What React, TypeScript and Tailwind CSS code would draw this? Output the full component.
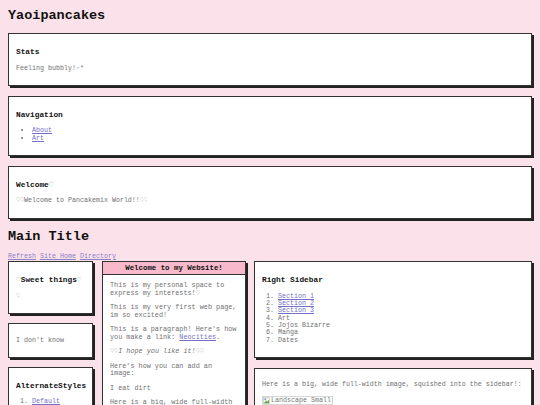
import React from 'react';

const Heart: React.FC<{ children?: React.ReactNode }> = ({ children }) => (
    <span className="text-[#8f8f8f] font-normal">{children ?? '♡'}</span>
);

const Box: React.FC<{ children: React.ReactNode; className?: string }> = ({ children, className = '' }) => (
    <div className={`border border-[#333] bg-white shadow-[2px_2px_0_#222] px-[7px] py-[6px] ${className}`}>
        {children}
    </div>
);

const H3: React.FC<{ children: React.ReactNode }> = ({ children }) => (
    <h3 className="my-[7.8px] text-[7.8px] font-bold text-[#111]">{children}</h3>
);

const P: React.FC<{ children: React.ReactNode; className?: string }> = ({ children, className = '' }) => (
    <p className={`my-[6.7px] ${className}`}>{children}</p>
);

const A: React.FC<{ children: React.ReactNode }> = ({ children }) => (
    <a href="#" className="text-[#7470c4] underline">{children}</a>
);

const App: React.FC = () => {
    const sidebar = [
        { label: 'Section 1', link: true },
        { label: 'Section 2', link: true },
        { label: 'Section 3', link: true },
        { label: 'Art', link: false },
        { label: 'Jojos Bizarre', link: false },
        { label: 'Manga', link: false },
        { label: 'Dates', link: false },
    ];

    return (
        <div className="h-[405px] overflow-hidden bg-[#fbe2ea] p-2 font-['Liberation_Mono','Courier_New',monospace] text-[6.67px] leading-[1.13] text-[#717171]">
            <h1 className="mb-[10px] text-[13.5px] font-bold text-[#111]">Yaoipancakes</h1>

            {/* Top boxes */}
            <div className="flex flex-col gap-[10px]">
                <Box>
                    <H3>Stats</H3>
                    <P>Feeling bubbly!◦*</P>
                </Box>
                <Box>
                    <H3>Navigation</H3>
                    <ul className="my-[6.7px] list-disc pl-[16px]">
                        <li><A>About</A></li>
                        <li><A>Art</A></li>
                    </ul>
                </Box>
                <Box>
                    <H3>Welcome<Heart /></H3>
                    <P><Heart>♡♡</Heart>Welcome to Pancakemix World!!<Heart>♡♡</Heart></P>
                </Box>
            </div>

            <h1 className="mt-[10px] mb-[9px] text-[13.5px] font-bold text-[#111]">Main Title</h1>
            <div className="mb-[1px] flex gap-[4px]">
                <a href="#" className="text-[#8a80c8] underline">Refresh</a>
                <a href="#" className="text-[#8a80c8] underline">Site Home</a>
                <a href="#" className="text-[#8a80c8] underline">Directory</a>
            </div>

            <div className="flex items-start">
                {/* Left column */}
                <div className="mr-[9px] flex w-[85px] shrink-0 flex-col gap-[9px]">
                    <Box>
                        <H3><Heart />Sweet things<Heart /></H3>
                        <P><Heart /></P>
                    </Box>
                    <Box>
                        <P>I don't know</P>
                    </Box>
                    <Box>
                        <H3>AlternateStyles</H3>
                        <ol className="my-[6.7px] list-decimal pl-[16px]">
                            <li><A>Default</A></li>
                            <li><A>Dark</A></li>
                            <li><A>Pastel</A></li>
                        </ol>
                    </Box>
                </div>

                {/* Main column */}
                <div className="mr-[8px] w-[144px] shrink-0 border border-[#333] bg-white shadow-[2px_2px_0_#222]">
                    <div className="flex h-[12.5px] items-center justify-center border-b border-[#333] bg-[#f7b9cb] text-[7.4px] font-bold text-[#111]">
                        Welcome to my Website!
                    </div>
                    <div className="px-[7px] pt-[0.5px] pb-[6px] text-[6.8px]">
                        <P>This is my personal space to express my interests!<Heart /></P>
                        <P>This is my very first web page, im so excited!</P>
                        <P>This is a paragraph! Here's how you make a link: <A>Neocities</A>.</P>
                        <P className="italic"><Heart>♡♡</Heart>I hope you like it!<Heart>♡♡</Heart></P>
                        <P>Here's how you can add an image:</P>
                        <P>I eat dirt</P>
                        <P>Here is a big, wide full-width image, squished into the main column!</P>
                    </div>
                </div>

                {/* Right column */}
                <div className="flex min-w-0 flex-1 flex-col gap-[10px]">
                    <Box>
                        <H3>Right Sidebar</H3>
                        <ol className="my-[6.7px] list-decimal pl-[16px] leading-[1.1]">
                            {sidebar.map(item => (
                                <li key={item.label}>{item.link ? <A>{item.label}</A> : item.label}</li>
                            ))}
                        </ol>
                    </Box>
                    <Box>
                        <P className="whitespace-nowrap">Here is a big, wide full-width image, squished into the sidebar!:</P>
                        <div className="my-[6.7px]">
                            <span className="inline-flex items-center gap-[1px] border border-[#d6d6d6] pr-[1px] text-[#777]">
                                <svg width="7" height="7" viewBox="0 0 16 16">
                                    <rect x="1" y="1" width="14" height="14" fill="#f2f2f2" stroke="#aaa" />
                                    <path d="M2 14 L7 8 L10 11 L14 6 L14 14 Z" fill="#5bae4a" />
                                    <circle cx="5" cy="5" r="2" fill="#6a9ad8" />
                                </svg>
                                Landscape Small
                            </span>
                        </div>
                    </Box>
                </div>
            </div>
        </div>
    );
};

export default App;
